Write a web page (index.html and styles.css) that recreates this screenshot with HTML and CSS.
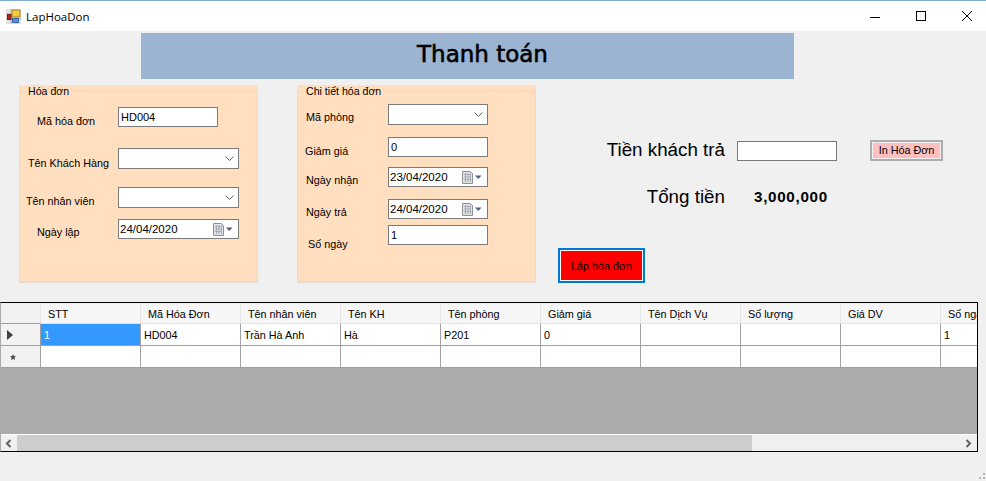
FILE: index.html
```html
<!DOCTYPE html>
<html lang="en">
    <head>
        <meta charset="UTF-8" />
        <title>LapHoaDon</title>
        <link rel="stylesheet" href="styles.css">
    </head>
    <body>
        <div class="titlebar">
            <svg class="app-icon" width="15" height="15" viewBox="0 0 15 15">
                <rect x="0" y="0" width="15" height="15" fill="#e4e4e4"/>
                <path d="M0 5h15M0 10h15M5 0v15M10 0v15" stroke="#b4b4b4" fill="none"/>
                <rect x="6" y="1" width="8" height="7" fill="#f5c93c" stroke="#a8832a"/>
                <rect x="1.5" y="5.5" width="3.5" height="5" fill="#b3261e" stroke="#7a1a14"/>
                <rect x="6.5" y="9.5" width="6" height="4" fill="#5c8fd8" stroke="#3a66a8"/>
            </svg>
            <span class="app-name">LapHoaDon</span>
            <div class="win-btns">
                <svg width="12" height="12" viewBox="0 0 12 12"><path d="M1 7.5h10" stroke="#000" fill="none"/></svg>
                <svg width="12" height="12" viewBox="0 0 12 12"><rect x="1.5" y="1.5" width="9" height="9" stroke="#000" fill="none"/></svg>
                <svg width="12" height="12" viewBox="0 0 12 12"><path d="M1 1l10 10M11 1L1 11" stroke="#000" fill="none"/></svg>
            </div>
        </div>

        <div class="banner"><h1>Thanh toán</h1></div>

        <div class="form">
            <div class="group">
                <fieldset>
                    <legend>Hóa đơn</legend>
                    <div class="fields fields-bill">
                        <label class="in-17 down-7">Mã hóa đơn</label>
                        <input class="box" value="HD004">
                        <label class="in-8 down-8">Tên Khách Hàng</label>
                        <div class="combo wide"><svg width="9" height="5" viewBox="0 0 9 5"><path d="M.5.5l4 4 4-4" stroke="#666" fill="none"/></svg></div>
                        <label class="in-6 down-7">Tên nhân viên</label>
                        <div class="combo wide"><svg width="9" height="5" viewBox="0 0 9 5"><path d="M.5.5l4 4 4-4" stroke="#666" fill="none"/></svg></div>
                        <label class="in-17 down-6">Ngày lập</label>
                        <div class="date wide">
                            <span>24/04/2020</span>
                            <svg width="20" height="13" viewBox="0 0 20 13"><path d="M.5.5h8l2 2v10h-10z" fill="#dfe3e8" stroke="#8b9099"/><path d="M2 3.500h7M2 6h7M2 8.500h7M3.500 2v9M6 2v9M8.500 2v9" stroke="#a9aeb6" fill="none"/><path d="M13 4.500h6.500l-3.250 3.500z" fill="#4e5d80"/></svg>
                        </div>
                    </div>
                </fieldset>
            </div>

            <div class="group">
                <fieldset>
                    <legend>Chi tiết hóa đơn</legend>
                    <div class="fields fields-detail">
                        <label class="in-8 down-6">Mã phòng</label>
                        <div class="combo"><svg width="9" height="5" viewBox="0 0 9 5"><path d="M.5.5l4 4 4-4" stroke="#666" fill="none"/></svg></div>
                        <label class="in-7 down-7">Giảm giá</label>
                        <input class="box" value="0">
                        <label class="in-8 down-6">Ngày nhận</label>
                        <div class="date">
                            <span>23/04/2020</span>
                            <svg width="20" height="13" viewBox="0 0 20 13"><path d="M.5.5h8l2 2v10h-10z" fill="#dfe3e8" stroke="#8b9099"/><path d="M2 3.500h7M2 6h7M2 8.500h7M3.500 2v9M6 2v9M8.500 2v9" stroke="#a9aeb6" fill="none"/><path d="M13 4.500h6.500l-3.250 3.500z" fill="#4e5d80"/></svg>
                        </div>
                        <label class="in-8 down-6">Ngày trả</label>
                        <div class="date">
                            <span>24/04/2020</span>
                            <svg width="20" height="13" viewBox="0 0 20 13"><path d="M.5.5h8l2 2v10h-10z" fill="#dfe3e8" stroke="#8b9099"/><path d="M2 3.500h7M2 6h7M2 8.500h7M3.500 2v9M6 2v9M8.500 2v9" stroke="#a9aeb6" fill="none"/><path d="M13 4.500h6.500l-3.250 3.500z" fill="#4e5d80"/></svg>
                        </div>
                        <label class="in-10 down-12">Số ngày</label>
                        <input class="box" value="1">
                    </div>
                </fieldset>
            </div>

            <div class="side">
                <div class="pay-row">
                    <span class="big-label">Tiền khách trả</span>
                    <input class="box">
                    <button class="print-btn"><span>In Hóa Đơn</span></button>
                </div>
                <div class="total-row">
                    <span class="big-label">Tổng tiền</span>
                    <span class="total">3,000,000</span>
                </div>
                <button class="create-btn">Lập hóa đơn</button>
            </div>
        </div>

        <div class="grid">
            <div class="grid-view">
                <table>
                    <thead>
                        <tr>
                            <th class="row-head"></th>
                            <th>STT</th>
                            <th>Mã Hóa Đơn</th>
                            <th>Tên nhân viên</th>
                            <th>Tên KH</th>
                            <th>Tên phòng</th>
                            <th>Giảm giá</th>
                            <th>Tên Dịch Vụ</th>
                            <th>Số lượng</th>
                            <th>Giá DV</th>
                            <th>Số ngày</th>
                        </tr>
                    </thead>
                    <tbody>
                        <tr>
                            <td class="row-head"><svg width="7" height="10" viewBox="0 0 7 10"><path d="M0 0l6 5-6 5z" fill="#404040"/></svg></td>
                            <td class="selected">1</td>
                            <td>HD004</td>
                            <td>Trần Hà Anh</td>
                            <td>Hà</td>
                            <td>P201</td>
                            <td>0</td>
                            <td></td>
                            <td></td>
                            <td></td>
                            <td>1</td>
                        </tr>
                        <tr>
                            <td class="row-head new-row"><svg width="6" height="6" viewBox="0 0 6 6"><path d="M3 0l.9 1.900L6 2.200 4.500 3.700 4.900 6 3 4.900 1.100 6l.4-2.300L0 2.200l2.100-.3z" fill="#505050"/></svg></td>
                            <td></td>
                            <td></td>
                            <td></td>
                            <td></td>
                            <td></td>
                            <td></td>
                            <td></td>
                            <td></td>
                            <td></td>
                            <td></td>
                        </tr>
                    </tbody>
                </table>
            </div>
            <div class="hscroll">
                <svg class="arrow" width="7" height="9" viewBox="0 0 7 9"><path d="M5.500 1L2 4.500 5.500 8" stroke="#606060" stroke-width="2" fill="none"/></svg>
                <div class="thumb"></div>
                <svg class="arrow" width="7" height="9" viewBox="0 0 7 9"><path d="M1.500 1L5 4.500 1.500 8" stroke="#606060" stroke-width="2" fill="none"/></svg>
            </div>
        </div>

        <svg class="grip" width="6" height="7" viewBox="0 0 6 7"><path d="M4 0h2v2H4zM0 4h2v2H0zM4 4h2v2H4z" fill="#b8b8b8"/></svg>
    </body>
</html>
```

FILE: styles.css
```css
html,
body {
    margin: 0;
    height: 481px;
    overflow: hidden;
}
body {
    position: relative;
    background: #f0f0f0;
    font-family: "Liberation Sans", Arial, sans-serif;
    font-size: 10.800px;
    color: #000;
}

/* title bar */
.titlebar {
    display: flex;
    align-items: center;
    height: 30px;
    border-top: 1px solid #7eacce;
    background: #fff;
    padding-left: 6px;
}
.app-icon {
    margin-top: 1px;
}
.app-name {
    margin-left: 5px;
    font-family: "Open Sans", sans-serif;
    font-size: 11.500px;
}
.win-btns {
    display: flex;
    margin-left: auto;
    margin-right: 13px;
    gap: 34px;
}

/* heading */
.banner {
    margin: 2px 0 0 141px;
    width: 653px;
    height: 46px;
    background: #9ab4d2;
}
.banner h1 {
    margin: 0;
    padding-left: 276px;
    font-family: "DejaVu Sans", sans-serif;
    font-size: 23px;
    font-weight: normal;
    line-height: 42px;
    -webkit-text-stroke: 0.6px #000;
}

/* top form */
.form {
    display: flex;
    gap: 39px;
    height: 198px;
    margin-top: 6px;
    padding-left: 19px;
}
.group {
    width: 239px;
    height: 198px;
    background: #ffdfbf;
}
fieldset {
    box-sizing: border-box;
    height: 198px;
    margin: 0;
    padding: 0;
    border: 1px solid #e2dcd4;
    border-bottom-width: 2px;
}
legend {
    margin-left: 5px;
    padding: 0 3px;
    font-size: 10.600px;
    line-height: 13px;
}
.fields {
    display: grid;
}
.fields-bill {
    grid-template-columns: 98px 1fr;
    grid-template-rows: 41px 39px 32px 20px;
    padding-top: 9px;
}
.fields-detail {
    grid-template-columns: 90px 1fr;
    grid-template-rows: 33px 30px 32px 26px 20px;
    padding-top: 6px;
}
label {
    line-height: 14px;
    white-space: nowrap;
}
.in-6 { padding-left: 6px; }
.in-7 { padding-left: 7px; }
.in-8 { padding-left: 8px; }
.in-10 { padding-left: 10px; }
.in-17 { padding-left: 17px; }
.down-6 { padding-top: 6px; }
.down-7 { padding-top: 7px; }
.down-8 { padding-top: 8px; }
.down-12 { padding-top: 12px; }

.box,
.combo,
.date {
    box-sizing: border-box;
    width: 100px;
    height: 20px;
    border: 1px solid #7a7a7a;
    background: #fff;
}
.box {
    display: block;
    margin: 0;
    padding: 0 2px;
    font: 11px "Liberation Sans", Arial, sans-serif;
    outline: none;
}
.combo {
    display: flex;
    align-items: center;
    justify-content: flex-end;
    height: 21px;
    padding-right: 4px;
}
.date {
    display: flex;
    align-items: center;
    justify-content: space-between;
    padding: 0 5px 0 1px;
    font-size: 11.500px;
}
.wide {
    width: 121px;
}

/* right side */
.side {
    margin-left: -17px;
    padding-top: 55px;
}
.pay-row {
    display: flex;
    align-items: flex-end;
    height: 21px;
}
.big-label {
    width: 167px;
    flex: none;
    text-align: right;
    font-size: 18.800px;
    line-height: 22px;
}
.pay-row .box {
    margin-left: 12px;
}
.print-btn {
    box-sizing: border-box;
    width: 73px;
    height: 21px;
    margin-left: 33px;
    padding: 1px;
    border: 2px solid #adadad;
    background: #f0f0f0;
    font: 10.800px "Liberation Sans", Arial, sans-serif;
}
.print-btn span {
    display: block;
    line-height: 15px;
    background: #ffbfbf;
}
.total-row {
    display: flex;
    align-items: center;
    height: 22px;
    margin-top: 25px;
}
.total {
    margin: -2px 0 0 29px;
    font-size: 15.200px;
    font-weight: bold;
    letter-spacing: 0.7px;
}
.create-btn {
    display: block;
    box-sizing: border-box;
    width: 87px;
    height: 35px;
    margin-top: 40px;
    padding: 0;
    border: 2px solid #0078d7;
    outline: 1px solid #fff;
    outline-offset: -3px;
    background: #f00;
    color: #000;
    font: 10.800px "Liberation Sans", Arial, sans-serif;
}

/* data grid */
.grid {
    box-sizing: border-box;
    display: flex;
    flex-direction: column;
    width: 978px;
    height: 150px;
    margin-top: 19px;
    border: 1px solid #000;
    border-left-color: #ababab;
    background: #ababab;
}
.grid-view {
    flex: 1;
    overflow: hidden;
    border-top: 1px solid #f0f0f0;
}
table {
    table-layout: fixed;
    width: 1040px;
    border-collapse: separate;
    border-spacing: 0;
}
th,
td {
    box-sizing: border-box;
    width: 100px;
    padding: 1px 0 0 3px;
    overflow: hidden;
    white-space: nowrap;
    text-align: left;
    font-weight: normal;
    line-height: 13px;
}
th {
    height: 20px;
    padding-left: 7px;
    background: #f6f6f6;
    border-right: 1px solid #e4e4e4;
    border-bottom: 1px solid #e4e4e4;
}
td {
    height: 22px;
    background: #fff;
    border-right: 1px solid #a0a0a0;
    border-bottom: 1px solid #a0a0a0;
}
.row-head {
    width: 40px;
    padding: 0 0 0 6px;
    background: #f2f2f2;
    border-right: 1px solid #a0a0a0;
    border-bottom: 1px solid #a0a0a0;
}
th.row-head {
    border-right-color: #e4e4e4;
}
.row-head svg {
    display: block;
}
.new-row {
    padding-left: 9px;
}
td.selected {
    background: #3399ff;
    color: #fff;
}
.hscroll {
    display: flex;
    align-items: center;
    flex: none;
    height: 16px;
    border-top: 1px solid #fff;
    background: #f0f0f0;
}
.arrow {
    flex: none;
    margin: 0 5px 0 4px;
}
.hscroll .thumb {
    width: 735px;
    height: 16px;
    margin-right: auto;
    background: #cdcdcd;
}
.grip {
    position: absolute;
    right: 1px;
    bottom: 1px;
}
```
